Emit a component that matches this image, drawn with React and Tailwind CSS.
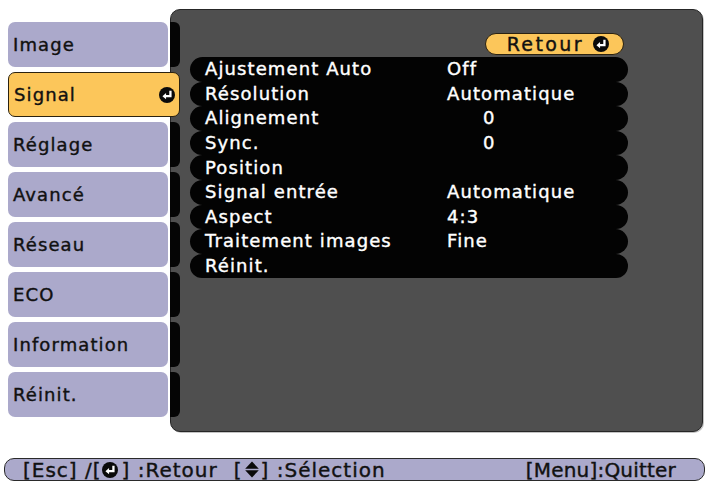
import React from "react";

const tabs = ["Image", "Signal", "Réglage", "Avancé", "Réseau", "ECO", "Information", "Réinit."];

const rows = [
	{ label: "Ajustement Auto", value: "Off" },
	{ label: "Résolution", value: "Automatique" },
	{ label: "Alignement", value: "0", indent: true },
	{ label: "Sync.", value: "0", indent: true },
	{ label: "Position", value: "" },
	{ label: "Signal entrée", value: "Automatique" },
	{ label: "Aspect", value: "4:3" },
	{ label: "Traitement images", value: "Fine" },
	{ label: "Réinit.", value: "" },
];

function EnterIcon({ size = 16 }) {
	return (
		<svg width={size} height={size} viewBox="0 0 14 14" className="shrink-0">
			<circle cx="7" cy="7" r="7" fill="#0a0a0a" />
			<path d="M10 3.2 V8 H5.5" stroke="#fff" strokeWidth="2" fill="none" />
			<path d="M3 8 L6.2 5.2 L6.2 10.8 Z" fill="#fff" />
		</svg>
	);
}

function UpDownIcon() {
	return (
		<svg width="18" height="17" viewBox="0 0 13 15" className="shrink-0">
			<path d="M6.5 0.5 L12.5 6.8 L0.5 6.8 Z" fill="#0a0a0a" />
			<path d="M6.5 14.5 L0.5 8.2 L12.5 8.2 Z" fill="#0a0a0a" />
		</svg>
	);
}

export default function App() {
	const font = { fontFamily: '"DejaVu Sans", "Liberation Sans", sans-serif' };
	const thick = "[-webkit-text-stroke:0.4px_currentColor]";

	return (
		<div className={`w-[709px] h-[487px] bg-white overflow-hidden text-[18px] font-normal ${thick}`} style={font}>
			<div className="flex pt-[9px]">
				{/* left tabs */}
				<div className="relative z-10 ml-[8px] -mr-[10px] mt-[13px] flex w-[172px] flex-col gap-[5px] tracking-[1.1px]">
					{tabs.map((t) =>
						t === "Signal" ? (
							<div
								key={t}
								className="flex h-[45px] w-[172px] items-center justify-between rounded-[7px] border-[1.5px] border-[#2b2210] bg-[#fcc65a] pl-[5px] pr-[4px] text-[#111]"
							>
								<span>{t}</span>
								<EnterIcon />
							</div>
						) : (
							<div key={t} className="flex h-[45px] items-stretch">
								<div className="flex w-[160px] items-center rounded-[7px] bg-[#aba9cb] pl-[5px] text-[#111]">
									{t}
								</div>
								<div className="ml-[2px] w-[10px] rounded-r-[6px] bg-[#050505]" />
							</div>
						)
					)}
				</div>

				{/* main panel */}
				<div className="h-[423px] w-[533px] rounded-[10px] border border-[#262626] bg-[#4f4f4f] pl-[19px] pt-[23px] shadow-[1px_1px_0_#c4c4c4]">
					<div className="ml-[295px] flex h-[22px] w-[139px] items-center justify-end gap-[9px] rounded-full border-[1.5px] border-[#2b2210] bg-[#fcc65a] pr-[14px] text-[19px] leading-none tracking-[2.4px] text-[#111]">
						<span>Retour</span>
						<EnterIcon />
					</div>
					<div className="mt-[2px] flex w-[438px] flex-col tracking-[1.1px]">
						{rows.map((r) => (
							<div
								key={r.label}
								className="flex h-[24.6px] items-center rounded-full bg-[#030303] pl-[15px] leading-none text-white"
							>
								<span className="w-[242px]">{r.label}</span>
								<span className={r.indent ? "pl-[36px]" : ""}>{r.value}</span>
							</div>
						))}
					</div>
				</div>
			</div>

			{/* bottom help bar */}
			<div className="ml-[4px] mt-[26px] flex h-[23px] w-[701px] items-center justify-between rounded-[10px] border-[1.5px] border-[#2a2a2a] bg-[#aba9cb] pl-[18px] pr-[28px] text-[20px] leading-none text-[#111]">
				<div className="flex items-center tracking-[1px]">
					<span>[Esc] /[</span>
					<EnterIcon />
					<span className="ml-[4px]">] :Retour</span>
					<span className="ml-[16px]">[</span>
					<UpDownIcon />
					<span>] :Sélection</span>
				</div>
				<span className="tracking-[0.2px]">[Menu]:Quitter</span>
			</div>
		</div>
	);
}
